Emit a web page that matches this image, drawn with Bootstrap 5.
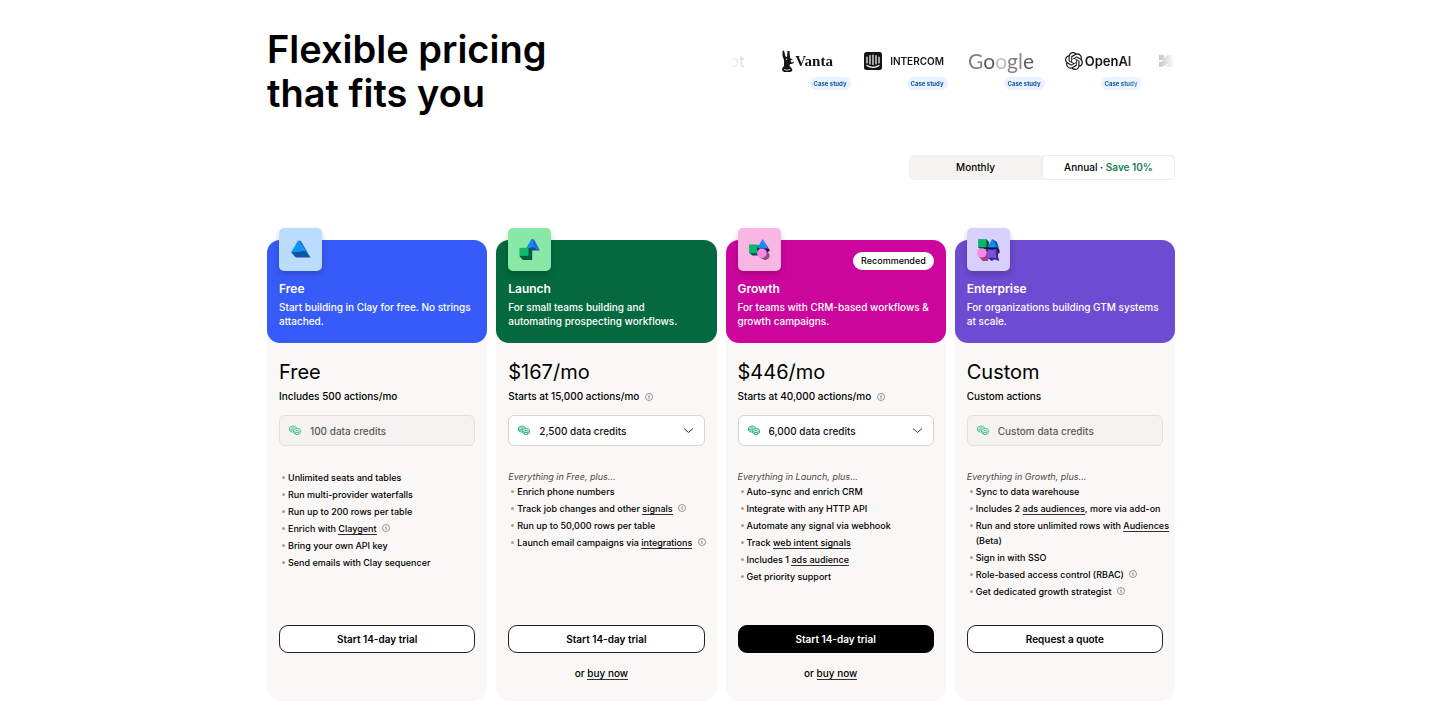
<!DOCTYPE html>
<html lang="en">
<head>
<meta charset="utf-8">
<meta name="viewport" content="width=device-width, initial-scale=1">
<title>Flexible pricing that fits you</title>
<link href="https://cdn.jsdelivr.net/npm/bootstrap@5.3.0/dist/css/bootstrap.min.css" rel="stylesheet">
<style>
  body { font-family: Inter, "Liberation Sans", sans-serif; font-size: 10px; font-weight: 500; line-height: 14px; color: #000; background: #fff; }
  .page { max-width: 910px; padding: 27px 0 11px 2px; }
  h1 { font-size: 38px; font-weight: 600; line-height: 44px; }
  .logos { width: 49%; height: 73px; -webkit-mask-image: linear-gradient(90deg, transparent, #000 12%, #000 88%, transparent); mask-image: linear-gradient(90deg, transparent, #000 12%, #000 88%, transparent); }
  .logo-item { width: 97px; padding-top: 22px; }
  .logo-mark { height: 24px; gap: 4px; line-height: 24px; color: #151515; }
  .logo-cut { font-size: 16px; color: #777; padding-right: 14px; }
  .vanta { font: bold 15px/24px "Liberation Serif", serif; }
  .intercom { font-weight: 600; }
  .openai { font-size: 13px; font-weight: 600; }
  .google { font: 400 21px/24px Lato, sans-serif; color: #808080; }
  .study { font-size: 6px; font-weight: 700; line-height: 13px; padding: 0 4px; margin: 4px 5px 0 0; color: #17549b; background: #e8f3ff; border-radius: 7px; text-decoration: none; }
  .billing { width: 266px; height: 25px; margin-top: 40px; background: #f4f3f1; border-radius: 5px; }
  .billing label { border: 1px solid transparent; border-radius: 5px; line-height: 23px; cursor: pointer; }
  .billing .btn-check:checked + label { background: #fff; border-color: #efece5; }
  .save { color: #15805a; font-weight: 600; }
  .plans { margin-top: 60px; gap: 9px; }
  .plan { background: #f9f8f6; border-radius: 14px; min-width: 0; }
  .plan-head { height: 103px; padding: 0 12px; color: #fff; border-radius: 13px; }
  .plan-head h2 { font-size: 12px; font-weight: 600; line-height: 18px; margin: 9px 0 2px; }
  .tile { width: 43px; height: 43px; margin-top: -12px; border-radius: 5px; box-shadow: 0 3px 6px #0003; }
  .pill { font-size: 9px; line-height: 18px; padding: 0 8px; margin-top: 12px; border-radius: 9px; color: #000; background: #fff; }
  .plan-body { padding: 15px 12px 20px; }
  .price { font-size: 20px; font-weight: 400; line-height: 28px; margin-bottom: 3px; }
  .info { width: 8px; height: 8px; margin-left: 3px; color: #77756f; }
  .credits { margin-top: 12px; }
  .credits svg { left: 10px; top: 10px; pointer-events: none; }
  .credits select, .credits input { height: 31px; padding: 0 26px 0 30px; font-size: 10px; font-weight: 500; line-height: 14px; color: #111; background-color: #fff; border: 1px solid #d8d5ce; border-radius: 6px; }
  .credits select { background-image: url("data:image/svg+xml,%3csvg xmlns='http://www.w3.org/2000/svg' viewBox='0 0 11 11'%3e%3cpath d='M1 3.5l4.5 4 4.5-4' fill='none' stroke='%23333'/%3e%3c/svg%3e"); background-size: 11px 11px; background-position: right 10px center; }
  .credits input:disabled { color: #5c5b58; background: #f4f3f1; border-color: #e3e1dd; opacity: 1; }
  .features { min-height: 155px; margin: 24px -10px 0 0; font-size: 9px; }
  .features ul { padding-left: 9px; margin: 0; list-style: none; }
  .features li { line-height: 15px; margin-bottom: 2px; position: relative; }
  .features li::before { content: ""; position: absolute; left: -6px; top: 6px; width: 3px; height: 3px; border-radius: 2px; background: #a3a19c; }
  .features .info { vertical-align: 0; }
  .features em { font-weight: 400; color: #4b4a47; line-height: 14px; }
  .under { color: inherit; text-decoration: none; border-bottom: 1px solid #333; }
  .cta { height: 28px; padding: 0; font-size: 10px; font-weight: 600; line-height: 14px; border: 1px solid #222; border-radius: 9px; background: #fff; color: #000; }
  .cta.solid { background: #000; color: #fff; border-color: #000; }
  .buy { margin-top: 13px; min-height: 15px; padding-right: 10px; }
</style>
</head>
<body>
<svg class="d-none" aria-hidden="true">
  <symbol id="info" viewBox="0 0 16 16"><circle cx="8" cy="8" r="7" fill="none" stroke="currentColor" stroke-width="1.5"/><path d="M6.5 7H8.3V12M8 4V5.4" fill="none" stroke="currentColor" stroke-width="1.6"/></symbol>
  <symbol id="coins" viewBox="0 0 24 20"><g fill="#d9f5e8" stroke="#36b684" stroke-width="2"><path d="M1 6v4c0 3 3 4 7 4 5 0 7-2 7-4V6"/><ellipse cx="8" cy="6" rx="7" ry="4"/><path d="M9 11v3c0 3 3 5 7 5s7-2 7-5v-3"/><ellipse cx="16" cy="11" rx="7" ry="4"/><path d="M13 15v3M19 15v3M4 10v3M5 6h6M13 11h6"/></g></symbol>
</svg>
<main class="page mx-auto">
  <header class="d-flex justify-content-between align-items-start">
    <h1 class="m-0">Flexible pricing<br>that fits you</h1>
    <div class="logos d-flex justify-content-center overflow-hidden">
      <div class="logo-item flex-shrink-0"><div class="logo-mark logo-cut d-flex justify-content-end">ot</div></div>
      <div class="logo-item flex-shrink-0 d-flex flex-column">
        <div class="logo-mark d-flex align-items-center justify-content-center vanta gap-0">
          <svg width="14" height="22" viewBox="0 0 28 44" aria-hidden="true"><path fill="#151515" d="M3 2l3-1 3 12 3 1 1-12 4 0 1 14 5 3 3 6-4 3-4 0-1 4 4 4 2 4-2 3-6 2H8l-5-3-1-5 4-5V20L3 12z"/><path fill="#fff" d="M19 21l4-2 2 5-4 1zM6 38c4 2 9 2 13 0l-1 2c-4 1-8 1-11 0zM10 17l3 2-3 1z"/></svg>Vanta</div>
        <a href="#vanta" class="study align-self-end">Case study</a>
      </div>
      <div class="logo-item flex-shrink-0 d-flex flex-column">
        <div class="logo-mark intercom d-flex align-items-center justify-content-center gap-2">
          <svg width="18" height="18" viewBox="0 0 36 36" aria-hidden="true"><rect width="36" height="36" rx="5" fill="#151515"/><path d="M6 10v12M12 7v17M18 6v19M24 7v17M30 10v12M6 27c7 5 17 5 24 0" fill="none" stroke="#fff" stroke-width="2.4" stroke-linecap="round"/></svg>INTERCOM</div>
        <a href="#intercom" class="study align-self-end">Case study</a>
      </div>
      <div class="logo-item flex-shrink-0 d-flex flex-column">
        <div class="logo-mark google text-center"><span>G</span><span style="color:#5d5d5d">o</span><span style="color:#bdbdbd">o</span><span>g</span><span style="color:#8d8d8d">l</span><span style="color:#5d5d5d">e</span></div>
        <a href="#google" class="study align-self-end">Case study</a>
      </div>
      <div class="logo-item flex-shrink-0 d-flex flex-column">
        <div class="logo-mark d-flex align-items-center justify-content-center openai" style="gap:2px">
          <svg width="18" height="18" viewBox="0 0 24 24" fill="#151515" aria-hidden="true"><path d="M22.2819 9.8211a5.9847 5.9847 0 0 0-.5157-4.9108 6.0462 6.0462 0 0 0-6.5098-2.9A6.0651 6.0651 0 0 0 4.9807 4.1818a5.9847 5.9847 0 0 0-3.9977 2.9 6.0462 6.0462 0 0 0 .7427 7.0966 5.98 5.98 0 0 0 .511 4.9107 6.051 6.051 0 0 0 6.5146 2.9001A5.9847 5.9847 0 0 0 13.2599 24a6.0557 6.0557 0 0 0 5.7718-4.2058 5.9894 5.9894 0 0 0 3.9977-2.9001 6.0557 6.0557 0 0 0-.7475-7.0729zm-9.022 12.6081a4.4755 4.4755 0 0 1-2.8764-1.0408l.1419-.0804 4.7783-2.7582a.7948.7948 0 0 0 .3927-.6813v-6.7369l2.02 1.1686a.071.071 0 0 1 .038.052v5.5826a4.504 4.504 0 0 1-4.4945 4.4944zm-9.6607-4.1254a4.4708 4.4708 0 0 1-.5346-3.0137l.142.0852 4.783 2.7582a.7712.7712 0 0 0 .7806 0l5.8428-3.3685v2.3324a.0804.0804 0 0 1-.0332.0615L9.74 19.9502a4.4992 4.4992 0 0 1-6.1408-1.6464zM2.3408 7.8956a4.485 4.485 0 0 1 2.3655-1.9728V11.6a.7664.7664 0 0 0 .3879.6765l5.8144 3.3543-2.0201 1.1685a.0757.0757 0 0 1-.071 0l-4.8303-2.7865A4.504 4.504 0 0 1 2.3408 7.872zm16.5963 3.8558L13.1038 8.364 15.1192 7.2a.0757.0757 0 0 1 .071 0l4.8303 2.7913a4.4944 4.4944 0 0 1-.6765 8.1042v-5.6772a.79.79 0 0 0-.407-.667zm2.0107-3.0231l-.142-.0852-4.7735-2.7818a.7759.7759 0 0 0-.7854 0L9.409 9.2297V6.8974a.0662.0662 0 0 1 .0284-.0615l4.8303-2.7866a4.4992 4.4992 0 0 1 6.6802 4.66zM8.3065 12.863l-2.02-1.1638a.0804.0804 0 0 1-.038-.0567V6.0742a4.4992 4.4992 0 0 1 7.3757-3.4537l-.142.0805L8.704 5.459a.7948.7948 0 0 0-.3927.6813zm1.0976-2.3654l2.602-1.4998 2.6069 1.4998v2.9994l-2.5974 1.4997-2.6067-1.4997Z"/></svg>OpenAI</div>
        <a href="#openai" class="study align-self-end">Case study</a>
      </div>
      <div class="logo-item flex-shrink-0"><div class="logo-mark d-flex align-items-center ps-2"><svg class="ms-1" width="20" height="12" viewBox="0 0 40 24" fill="#444" aria-hidden="true"><path d="M40 0L27 24H15l5-10C16 20 9 24 0 24V14s6 0 9-4H0V0h11v8l5-8h9v8l5-8z"/></svg></div></div>
    </div>
  </header>

  <div class="d-flex justify-content-end">
    <div class="billing d-flex text-center" role="group" aria-label="Billing period">
      <input class="btn-check" type="radio" name="period" id="monthly"><label class="w-50" for="monthly">Monthly</label>
      <input class="btn-check" type="radio" name="period" id="annual" checked><label class="w-50" for="annual">Annual · <span class="save">Save 10%</span></label>
    </div>
  </div>

  <div class="plans d-flex">
    <section class="plan w-25 d-flex flex-column">
      <div class="plan-head" style="background:#375bf9">
        <div class="tile" style="background:#bbddfd"><svg width="43" height="43" viewBox="0 0 128 128" aria-hidden="true"><path fill="#0f94f8" d="M57 37L36 72 78 68z"/><path fill="#0d6ed0" d="M57 37l8 2 29 49-16-20z"/><path fill="#0b55a4" d="M36 72l42-4 16 20H50z"/></svg></div>
        <h2>Free</h2>
        <div>Start building in Clay for free. No strings attached.</div>
      </div>
      <div class="plan-body d-flex flex-column flex-grow-1">
        <div class="price">Free</div>
        <div>Includes 500 actions/mo</div>
        <div class="credits position-relative"><input class="form-control" aria-label="Free plan credits" value="100 data credits" disabled><svg class="position-absolute" style="opacity:.8" width="12" height="10"><use href="#coins"/></svg></div>
        <div class="features flex-grow-1">
          <ul>
            <li>Unlimited seats and tables</li>
            <li>Run multi-provider waterfalls</li>
            <li>Run up to 200 rows per table</li>
            <li>Enrich with <a class="under" href="#claygent">Claygent</a> <svg class="info"><use href="#info"/></svg></li>
            <li>Bring your own API key</li>
            <li>Send emails with Clay sequencer</li>
          </ul>
        </div>
        <button class="btn cta w-100" type="button">Start 14-day trial</button>
        <div class="buy"></div>
      </div>
    </section>

    <section class="plan w-25 d-flex flex-column">
      <div class="plan-head" style="background:#04693f">
        <div class="tile" style="background:#87e8a8"><svg width="43" height="43" viewBox="0 0 128 128" aria-hidden="true"><path fill="#078ff5" d="M70 32L54 61l22-5z"/><path fill="#2864dc" d="M70 32l8 3 17 31-19-10z"/><path fill="#114caa" d="M54 61l22-5 19 11H62z"/><path fill="#065c3b" d="M61 59l11 7v29H44L34 83z"/><path fill="#10b86c" d="M34 59h27v24H34z"/></svg></div>
        <h2>Launch</h2>
        <div>For small teams building and<br>automating prospecting workflows.</div>
      </div>
      <div class="plan-body d-flex flex-column flex-grow-1">
        <div class="price">$167/mo</div>
        <div>Starts at 15,000 actions/mo <svg class="info"><use href="#info"/></svg></div>
        <div class="credits position-relative"><select class="form-select" aria-label="Launch plan credits"><option>2,500 data credits</option></select><svg class="position-absolute" width="12" height="10"><use href="#coins"/></svg></div>
        <div class="features flex-grow-1">
          <em class="d-block">Everything in Free, plus...</em>
          <ul>
            <li>Enrich phone numbers</li>
            <li>Track job changes and other <a class="under" href="#signals">signals</a> <svg class="info"><use href="#info"/></svg></li>
            <li>Run up to 50,000 rows per table</li>
            <li class="text-nowrap">Launch email campaigns via <a class="under" href="#integrations">integrations</a> <svg class="info"><use href="#info"/></svg></li>
          </ul>
        </div>
        <button class="btn cta w-100" type="button">Start 14-day trial</button>
        <div class="buy text-center">or <a class="under" href="#buy-launch">buy now</a></div>
      </div>
    </section>

    <section class="plan w-25 d-flex flex-column">
      <div class="plan-head" style="background:#cc059c">
        <div class="d-flex justify-content-between align-items-start">
          <div class="tile" style="background:#f8b7e2"><svg width="43" height="43" viewBox="0 0 128 128" aria-hidden="true"><path fill="#0a4c43" d="M33 74l10 8h18V50z"/><path fill="#0ab56d" d="M33 49h25v26H33z"/><path fill="#078ff5" d="M73 33L57 60h30z"/><path fill="#1660c9" d="M73 33l22 33-8-6z"/><path fill="#121a3d" d="M57 60h30l8 6-9 9-26-3z"/><path fill="#98477f" d="M61 85L81 65l11 11c7 12-7 23-17 18z"/><circle cx="71" cy="75" r="14" fill="#fa87e6"/></svg></div>
          <span class="pill">Recommended</span>
        </div>
        <h2>Growth</h2>
        <div>For teams with CRM-based workflows &amp; growth campaigns.</div>
      </div>
      <div class="plan-body d-flex flex-column flex-grow-1">
        <div class="price">$446/mo</div>
        <div>Starts at 40,000 actions/mo <svg class="info"><use href="#info"/></svg></div>
        <div class="credits position-relative"><select class="form-select" aria-label="Growth plan credits"><option>6,000 data credits</option></select><svg class="position-absolute" width="12" height="10"><use href="#coins"/></svg></div>
        <div class="features flex-grow-1">
          <em class="d-block">Everything in Launch, plus...</em>
          <ul>
            <li>Auto-sync and enrich CRM</li>
            <li>Integrate with any HTTP API</li>
            <li>Automate any signal via webhook</li>
            <li>Track <a class="under" href="#intent">web intent signals</a></li>
            <li>Includes 1 <a class="under" href="#audience">ads audience</a></li>
            <li>Get priority support</li>
          </ul>
        </div>
        <button class="btn cta solid w-100" type="button">Start 14-day trial</button>
        <div class="buy text-center">or <a class="under" href="#buy-growth">buy now</a></div>
      </div>
    </section>

    <section class="plan w-25 d-flex flex-column">
      <div class="plan-head" style="background:#6d4bd3">
        <div class="tile" style="background:#d8cffd"><svg width="43" height="43" viewBox="0 0 128 128" aria-hidden="true"><path fill="#0c4337" d="M57 33l8 8v22H41l-8-6z"/><path fill="#0ab56d" d="M33 33h25v24H33z"/><path fill="#1359b5" d="M75 33l14 8 9 29-9-4z"/><path fill="#078ff5" d="M75 33L60 57h30z"/><path fill="#111637" d="M56 57h34l8 16-12 6-28-8z"/><path fill="#9c4685" d="M34 84l21-20 8 12v22H47z"/><path fill="#40248f" d="M62 90l26-26 6 8-2 11 4 15-14-4-8 4z"/><path fill="#7950df" d="M60 62q14 6 28 0-5 14 0 28-14-5-28 0 5-14 0-28"/><circle cx="44" cy="74" r="14" fill="#fa87e6"/></svg></div>
        <h2>Enterprise</h2>
        <div>For organizations building GTM systems at scale.</div>
      </div>
      <div class="plan-body d-flex flex-column flex-grow-1">
        <div class="price">Custom</div>
        <div>Custom actions</div>
        <div class="credits position-relative"><input class="form-control" aria-label="Enterprise plan credits" value="Custom data credits" disabled><svg class="position-absolute" style="opacity:.8" width="12" height="10"><use href="#coins"/></svg></div>
        <div class="features flex-grow-1">
          <em class="d-block">Everything in Growth, plus...</em>
          <ul>
            <li>Sync to data warehouse</li>
            <li>Includes 2 <a class="under" href="#audiences">ads audiences</a>, more via add-on</li>
            <li>Run and store unlimited rows with <a class="under" href="#beta">Audiences</a><br>(Beta)</li>
            <li>Sign in with SSO</li>
            <li>Role-based access control (RBAC) <svg class="info"><use href="#info"/></svg></li>
            <li>Get dedicated growth strategist <svg class="info"><use href="#info"/></svg></li>
          </ul>
        </div>
        <button class="btn cta w-100" type="button">Request a quote</button>
        <div class="buy"></div>
      </div>
    </section>
  </div>
</main>
<script src="https://cdn.jsdelivr.net/npm/bootstrap@5.3.0/dist/js/bootstrap.bundle.min.js"></script>
</body>
</html>
